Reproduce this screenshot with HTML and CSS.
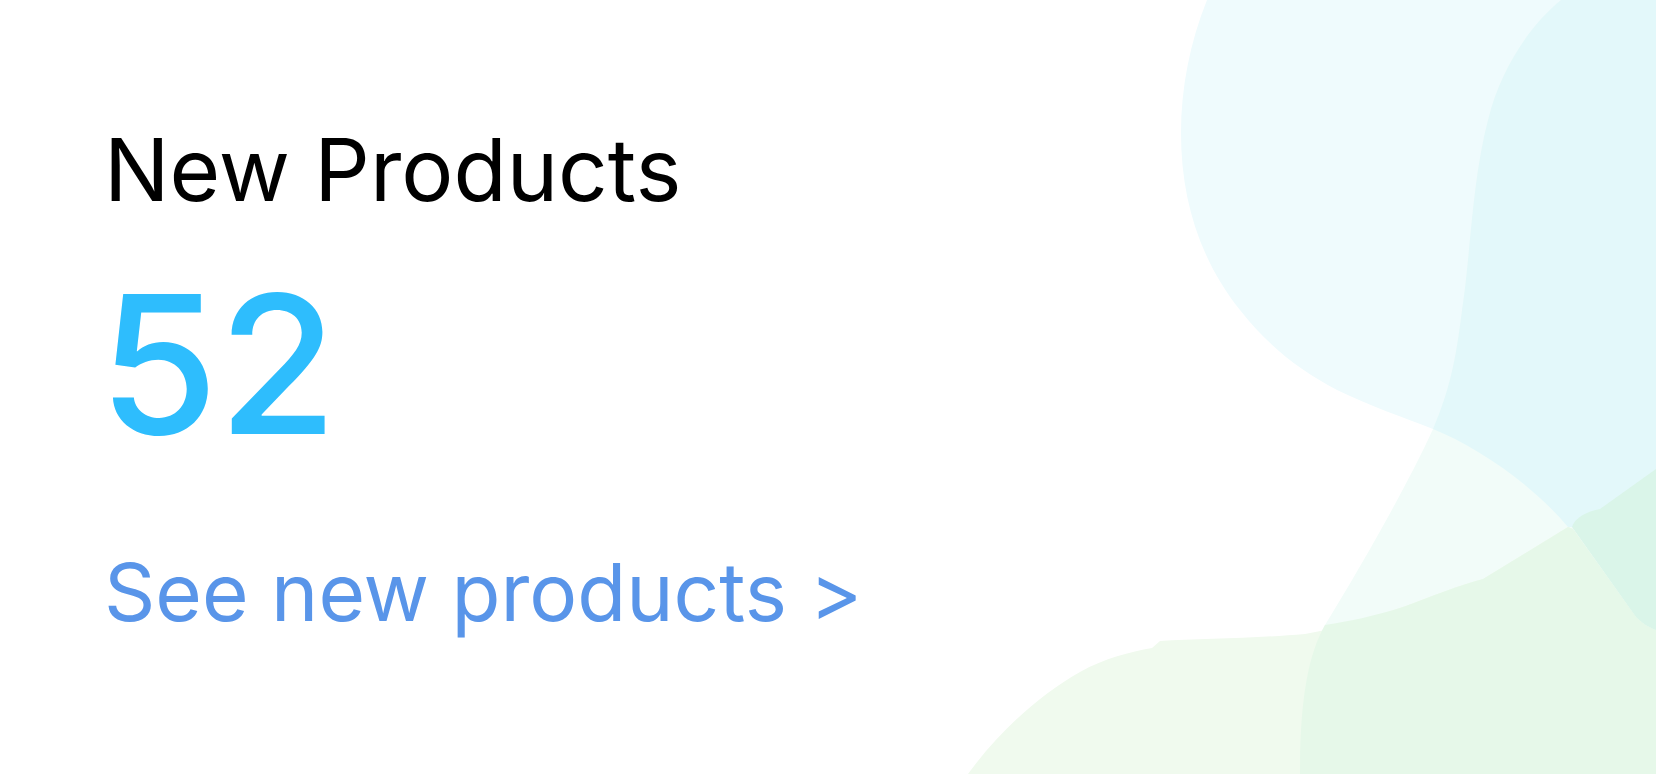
FILE: index.html
```html
<!DOCTYPE html>
<html lang="en">
<head>
<meta charset="utf-8">
<title>New Products</title>
<link rel="stylesheet" href="styles.css">
</head>
<body>
<main class="card">
  <svg class="card-bg" viewBox="0 0 1656 774" preserveAspectRatio="none" aria-hidden="true">
    <path class="blob-a" d="M1207,0 C1190,42 1181,88 1181,133 C1181,200 1200,260 1240,310 C1270,348 1300,370 1337,390 C1370,406 1405,418 1433,429 C1475,446 1530,482 1568,527 L1656,527 L1656,0 Z"/>
    <path class="blob-b" d="M1561,0 C1530,25 1500,70 1488,120 C1472,180 1470,260 1462,310 C1457,350 1452,385 1433,429 C1410,480 1365,560 1325,625 C1308,655 1300,700 1300,774 L1656,774 L1656,0 Z"/>
    <path class="blob-ab" d="M1561,0 C1530,25 1500,70 1488,120 C1472,180 1470,260 1462,310 C1457,350 1452,385 1433,429 C1475,446 1530,482 1568,527 L1656,527 L1656,0 Z"/>
    <path class="blob-c" d="M968,774 C1000,730 1040,695 1080,672 C1105,658 1130,652 1152,648 L1160,641 C1200,639 1260,638 1305,634 C1340,628 1370,618 1403,607 C1430,597 1460,585 1483,579 L1568,527 L1573,529 L1636,617 C1643,624 1650,628 1656,630 L1656,774 Z"/>
    <path class="blob-cb" d="M1325,625 C1308,655 1300,700 1300,774 L1656,774 L1656,630 C1650,628 1643,624 1636,617 L1573,529 L1568,527 L1483,579 C1460,585 1430,597 1403,607 C1375,616 1350,621 1325,625 Z"/>
    <path class="blob-d" d="M1656,469 L1600,509 C1585,512 1575,518 1572,527 L1636,617 C1643,624 1650,628 1656,630 Z"/>
  </svg>
  <div class="content">
    <h1 class="title">New Products</h1>
    <p class="count">52</p>
    <a class="link" href="#">See new products &gt;</a>
  </div>
</main>
</body>
</html>
```
FILE: styles.css
```css
html, body {
  margin: 0;
  padding: 0;
  background: #ffffff;
}

.card {
  position: relative;
  width: 1656px;
  height: 774px;
  overflow: hidden;
  background: #ffffff;
  font-family: Inter, "Noto Sans", sans-serif;
}

.card-bg {
  position: absolute;
  inset: 0;
  width: 100%;
  height: 100%;
  z-index: 0;
}

.blob-a { fill: #effbfd; }
.blob-b { fill: #f2fcf9; }
.blob-ab { fill: #e3f8fa; }
.blob-c { fill: #f0faee; }
.blob-cb { fill: #e6f8e9; }
.blob-d { fill: #daf5e9; }

.content {
  position: relative;
  z-index: 1;
  display: flex;
  flex-direction: column;
  align-items: flex-start;
  padding: 126px 0 0 104px;
}

.title {
  margin: 0;
  font-size: 87px;
  line-height: 1;
  font-weight: 400;
  color: #000000;
}

.count {
  margin: 55px 0 0 -5px;
  font-size: 193px;
  line-height: 1;
  font-weight: 500;
  color: #2ebdfd;
}

.link {
  margin-top: 91px;
  font-size: 80px;
  line-height: 1;
  font-weight: 400;
  color: #5995e9;
  text-decoration: none;
}
```
